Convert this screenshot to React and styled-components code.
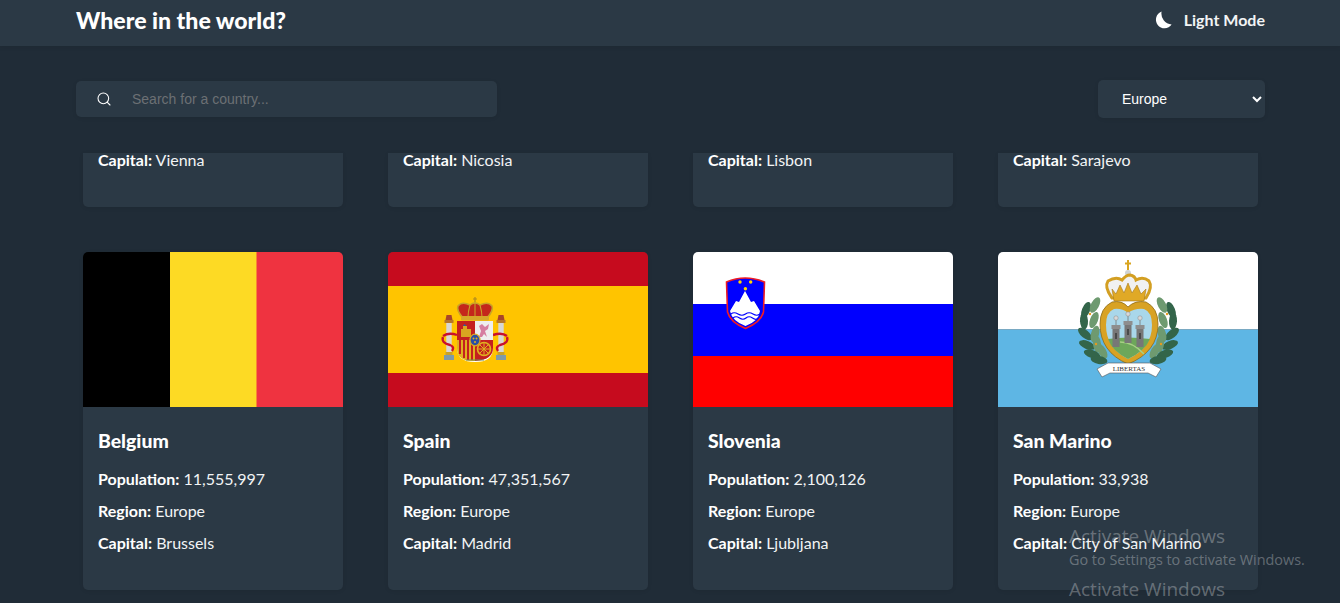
import styled, { createGlobalStyle } from "styled-components";
import { Search } from "lucide-react";

const GlobalStyle = createGlobalStyle`
  html, body {
    margin: 0;
    height: 100%;
    overflow: hidden;
    background-color: #202c37;
  }
  * { box-sizing: border-box; }
`;

const Page = styled.div`
  position: relative;
  height: 603px;
  overflow: hidden;
  color: #fff;
  font-family: "Lato", "Open Sans", sans-serif;
`;

const Header = styled.header`
  height: 46px;
  padding: 0 75px 6px 76px;
  display: flex;
  align-items: center;
  justify-content: space-between;
  background-color: #2b3945;
  box-shadow: 0 2px 4px rgba(0, 0, 0, 0.06);
`;

const Title = styled.h1`
  margin: 0;
  font-size: 23.1px;
  font-weight: 900;
`;

const ModeToggle = styled.div`
  display: flex;
  align-items: center;
  gap: 12px;
  height: 20px;
  line-height: 18px;
  font-size: 16px;
  font-weight: 700;
  color: #f2f4f5;
`;

const Toolbar = styled.div`
  height: 107px;
  padding: 0 75px 2px 76px;
  display: flex;
  align-items: center;
  justify-content: space-between;
`;

const SearchBox = styled.label`
  width: 421px;
  height: 36px;
  padding-left: 20px;
  display: flex;
  align-items: center;
  gap: 20px;
  background-color: #2b3945;
  border-radius: 5px;
  box-shadow: 0 1px 4px rgba(0, 0, 0, 0.08);
`;

const SearchInput = styled.input`
  flex: 1;
  padding: 0;
  border: none;
  outline: none;
  background: transparent;
  color: #fff;
  font-family: "Liberation Sans", sans-serif;
  font-size: 14px;
  &::placeholder { color: #6c7074; opacity: 1; }
`;

const RegionSelect = styled.select`
  width: 167px;
  height: 38px;
  padding-left: 20px;
  border: none;
  outline: none;
  border-radius: 5px;
  background-color: #2b3945;
  color: #fff;
  font-family: "Liberation Sans", sans-serif;
  font-size: 14px;
  box-shadow: 0 1px 4px rgba(0, 0, 0, 0.08);
`;

const Grid = styled.main`
  padding-left: 83px;
  display: grid;
  grid-template-columns: repeat(4, 260px);
  column-gap: 45px;
  row-gap: 45px;
  align-items: start;
`;

const Card = styled.article`
  background-color: #2b3945;
  border-radius: 5px;
  overflow: hidden;
  box-shadow: 0 1px 4px rgba(0, 0, 0, 0.08);
`;

/* top row is scrolled away, only the last line of each card is left */
const ClippedCard = styled(Card)`
  height: 54px;
  padding: 0 15px;
  border-radius: 0 0 5px 5px;
`;

const FlagBox = styled.div`
  height: 155px;
  svg { display: block; width: 260px; height: 155px; }
`;

const CardBody = styled.div`
  height: 183px;
  padding: 20px 15px 0;
`;

const CountryName = styled.h2`
  margin: 0 0 8px;
  height: 28px;
  line-height: 28px;
  font-size: 19.4px;
  font-weight: 900;
`;

const InfoLine = styled.p`
  margin: 0;
  height: 32px;
  line-height: 32px;
  font-size: 16px;
  font-weight: 400;
  color: #f2f4f5;
  white-space: nowrap;
  ${(p) => p.$clipped && "height: 15px; line-height: 14px;"}
`;

const InfoLabel = styled.strong`
  font-weight: 700;
  color: #fff;
`;

const Watermark = styled.div`
  position: absolute;
  left: 1069px;
  top: 524px;
  color: rgba(255, 255, 255, 0.3);
  font-family: "Open Sans", sans-serif;
  pointer-events: none;
`;

const WatermarkTitle = styled.div`
  height: 25px;
  line-height: 25px;
  font-size: 19px;
  white-space: nowrap;
`;

const WatermarkText = styled.div`
  height: 22px;
  line-height: 22px;
  font-size: 14.4px;
  white-space: nowrap;
  margin-bottom: 6px;
`;

const MoonIcon = () => (
  <svg width="17" height="18" viewBox="0 0 17 18">
    <path
      d="M6.6 0.6 A8.6 8.6 0 1 0 16.6 13.6 A11 11 0 0 1 6.6 0.6 Z"
      fill="#fff"
    />
  </svg>
);

const BelgiumFlag = () => (
  <svg viewBox="0 0 260 155">
    <rect width="87" height="155" fill="#000" />
    <rect x="87" width="87" height="155" fill="#fdda24" />
    <rect x="173.500" width="86.500" height="155" fill="#ef3340" />
  </svg>
);

const Pillar = ({ x }) => (
  <g>
    <rect x={x - 4.5} y={68} width={9} height={3} fill="#b5762a" />
    <path d={`M${x - 3.5} 68 L${x - 2.5} 63 H${x + 2.5} L${x + 3.5} 68 Z`} fill="#a8442a" />
    <rect x={x - 2.7} y={71} width={5.4} height={30} fill="#d7d7d7" />
    <rect x={x - 3.5} y={100} width={7} height={3} fill="#c9a227" />
    <rect x={x - 5} y={103} width={10} height={5} fill="#7f9aa8" />
  </g>
);

const SpainFlag = () => (
  <svg viewBox="0 0 260 155">
    <rect width="260" height="155" fill="#c60b1e" />
    <rect y="34" width="260" height="87" fill="#ffc400" />
    <Pillar x={61} />
    <Pillar x={113} />
    <path
      d="M55 84 Q61 80 69 83 M105 83 Q114 80 119 84 M55 85 Q53 91 62 93 Q67 95 64 99 M119 85 Q121 91 112 93 Q107 95 110 99"
      fill="none"
      stroke="#c8102e"
      strokeWidth="2.4"
    />
    {/* crown */}
    <path d="M87 45 V50 M85 47 H89" stroke="#b08a20" strokeWidth="1.2" />
    <path
      d="M75 66 Q68 58 70 54 Q74 49 82 53 Q87 49 92 53 Q100 49 104 54 Q106 58 99 66 Z"
      fill="#c4271c"
      stroke="#c9a227"
      strokeWidth="1.6"
    />
    <path d="M82 53 Q80 60 80 65 M92 53 Q94 60 94 65 M87 50 V65" stroke="#c9a227" strokeWidth="1.1" fill="none" />
    <rect x="73" y="64" width="28" height="4.500" rx="1" fill="#d6a829" />
    {/* shield */}
    <path d="M69 69 H105 V96 Q105 110 87 110 Q69 110 69 96 Z" fill="#fff" />
    <path d="M69 69 H87 V88 H69 Z" fill="#c4201f" />
    <path d="M73 85 V77 H75 V74 H79 V77 H83 V85 Z" fill="#d9a520" />
    <path d="M76.500 72 L78.500 74 H75 Z" fill="#2a5fa0" />
    <path d="M87 69 H105 V88 H87 Z" fill="#eeeeee" />
    <path d="M91 85 L93 79 L91 74 L94 72 L97 75 L101 72 L100 77 L97 79 L99 85 L96 82 L94 85 Z" fill="#d67ea0" />
    <path d="M69 88 H87 V109 Q69 110 69 96 Z" fill="#e0b020" />
    <path d="M72 88 V102 M76 88 V106 M80 88 V108 M84 88 V108" stroke="#c4201f" strokeWidth="2" />
    <path d="M87 88 H105 V96 Q105 108 87 109 Z" fill="#c4201f" />
    <circle cx="96" cy="97" r="6.500" fill="none" stroke="#e0b020" strokeWidth="1.6" />
    <path d="M96 90.500 V103.500 M89.500 97 H102.500 M91.500 92.500 L100.500 101.500 M100.500 92.500 L91.500 101.500" stroke="#e0b020" strokeWidth="1" />
    <ellipse cx="87" cy="88" rx="5" ry="5.800" fill="#2a4fa5" stroke="#d6a829" strokeWidth="1.2" />
    <circle cx="85.500" cy="86.500" r="1" fill="#e0b020" />
    <circle cx="88.500" cy="86.500" r="1" fill="#e0b020" />
    <circle cx="87" cy="90" r="1" fill="#e0b020" />
    <path d="M78 108 H96" stroke="#6f8a5a" strokeWidth="1.2" />
  </svg>
);

const SloveniaFlag = () => (
  <svg viewBox="0 0 260 155">
    <rect width="260" height="52" fill="#fff" />
    <rect y="52" width="260" height="52" fill="#00f" />
    <rect y="104" width="260" height="51" fill="#f00" />
    <path d="M33.500 30 Q52 22 71.500 30 L70.500 60 Q68 70 52.500 76.500 Q37 70 34.500 60 Z" fill="#00f" stroke="#f01c24" strokeWidth="1.6" />
    <path d="M37 59 L43 49 L46 50 L52 39 L58 50 L61 49 L67 59 Q66 69 52.500 74 Q39 69 37 59 Z" fill="#fff" />
    <path
      d="M38 62 Q41 59.500 45 62 T52.500 62 T60 62 T67 62 M40 66 Q43 63.500 46.500 66 T53 66 T59.500 66 T65 66"
      fill="none"
      stroke="#00f"
      strokeWidth="1.2"
    />
    <circle cx="47" cy="30" r="1.700" fill="#ffd800" />
    <circle cx="57.700" cy="30" r="1.700" fill="#ffd800" />
    <circle cx="52.400" cy="36.800" r="1.700" fill="#ffd800" />
  </svg>
);

const leaves = [
  [88, 58, 22], [97, 53, 28], [86, 69, -3], [96, 68, 20], [87, 82, -50], [97, 82, 15],
  [89, 93, -68], [99, 92, -5], [94, 102, -72], [104, 99, -30], [101, 108, -80],
];

const Tower = ({ x, y }) => (
  <g>
    <path d={`M${x} ${y + 6} V${y - 1}`} stroke="#777" strokeWidth="0.8" />
    <circle cx={x} cy={y - 1} r={2.2} fill="#d8d8d8" stroke="#888" strokeWidth="0.5" />
    <rect x={x - 4.5} y={y + 6} width={9} height={4} fill="#8e8e8e" />
    <rect x={x - 3.5} y={y + 10} width={7} height={18} fill="#777" />
    <rect x={x - 0.8} y={y + 14} width={1.6} height={6} fill="#3f3f3f" />
  </g>
);

const SanMarinoFlag = () => (
  <svg viewBox="0 0 260 155">
    <rect width="260" height="77.500" fill="#fff" />
    <rect y="77.500" width="260" height="77.500" fill="#5eb6e4" />
    {/* laurels */}
    {leaves.map(([x, y, r], i) => (
      <ellipse key={i} cx={x} cy={y} rx="4" ry="8.500" fill={i % 2 ? "#6e9a70" : "#33654a"} transform={`rotate(${r} ${x} ${y})`} />
    ))}
    {leaves.map(([x, y, r], i) => (
      <ellipse key={i} cx={261 - x} cy={y} rx="4" ry="8.500" fill={i % 2 ? "#6e9a70" : "#33654a"} transform={`rotate(${-r} ${261 - x} ${y})`} />
    ))}
    <circle cx="92" cy="62" r="1.200" fill="#e59a1f" />
    <circle cx="169" cy="62" r="1.200" fill="#e59a1f" />
    <circle cx="98" cy="92" r="1.200" fill="#e59a1f" />
    <circle cx="163" cy="92" r="1.200" fill="#e59a1f" />
    {/* crown */}
    <path d="M130 8 V18 M127 11.500 H133" stroke="#d9a520" strokeWidth="2" />
    <circle cx="130" cy="21" r="3" fill="#cfd3d6" />
    <path d="M114 46 Q106 35 110 29 Q118 24 124 28 Q128 23 132 23 Q137 24 138 28 Q145 24 151 29 Q155 35 148 46 Z" fill="#f1f1f1" stroke="#d39f22" strokeWidth="3" />
    <path d="M114 37 L118 42 L122 33 L126 41 L130 31 L134 41 L139 33 L143 42 L148 37 L146 49 H116 Z" fill="#e0a926" stroke="#a6781a" strokeWidth="0.6" />
    {/* shield */}
    <path d="M130 112 Q102 100 102 72 Q102 56 114 50 Q124 48 130 55 Q137 48 148 50 Q160 56 160 72 Q160 100 130 112 Z" fill="#d8a224" stroke="#8f6c17" strokeWidth="0.8" />
    <path d="M130 107 Q108 96 108 73 Q108 60 116 57 Q124 56 130 61 Q137 56 146 57 Q154 60 154 73 Q154 96 130 107 Z" fill="#a9d7ea" />
    <path d="M130 107 Q114 99 110 87 Q130 84 152 87 Q147 99 130 107 Z" fill="#6da75a" />
    <path d="M122 90 Q135 90 146 102" stroke="#a8cf86" strokeWidth="1.500" fill="none" />
    <Tower x={118} y={67} />
    <Tower x={130} y={63} />
    <Tower x={142} y={67} />
    {/* ribbon */}
    <path d="M99 117 L110 111 H152 L163 117 L158 125 L150 121 H112 L104 125 Z" fill="#fff" stroke="#555" strokeWidth="0.6" />
    <text x="131" y="118.500" textAnchor="middle" fontSize="7" fontFamily="Liberation Serif, serif" fill="#333">LIBERTAS</text>
  </svg>
);

const clippedCapitals = ["Vienna", "Nicosia", "Lisbon", "Sarajevo"];

const countries = [
  { name: "Belgium", population: "11,555,997", capital: "Brussels", Flag: BelgiumFlag },
  { name: "Spain", population: "47,351,567", capital: "Madrid", Flag: SpainFlag },
  { name: "Slovenia", population: "2,100,126", capital: "Ljubljana", Flag: SloveniaFlag },
  { name: "San Marino", population: "33,938", capital: "City of San Marino", Flag: SanMarinoFlag },
];

export default function App() {
  return (
    <Page>
      <GlobalStyle />
      <Header>
        <Title>Where in the world?</Title>
        <ModeToggle>
          <MoonIcon />
          Light Mode
        </ModeToggle>
      </Header>
      <Toolbar>
        <SearchBox>
          <Search size={16} color="#fff" strokeWidth={1.6} />
          <SearchInput placeholder="Search for a country..." />
        </SearchBox>
        <RegionSelect defaultValue="Europe">
          <option>Europe</option>
          <option>Africa</option>
          <option>Americas</option>
          <option>Asia</option>
          <option>Oceania</option>
        </RegionSelect>
      </Toolbar>
      <Grid>
        {clippedCapitals.map((capital) => (
          <ClippedCard key={capital}>
            <InfoLine $clipped><InfoLabel>Capital:</InfoLabel> {capital}</InfoLine>
          </ClippedCard>
        ))}
        {countries.map(({ name, population, capital, Flag }) => (
          <Card key={name}>
            <FlagBox><Flag /></FlagBox>
            <CardBody>
              <CountryName>{name}</CountryName>
              <InfoLine><InfoLabel>Population:</InfoLabel> {population}</InfoLine>
              <InfoLine><InfoLabel>Region:</InfoLabel> Europe</InfoLine>
              <InfoLine><InfoLabel>Capital:</InfoLabel> {capital}</InfoLine>
            </CardBody>
          </Card>
        ))}
      </Grid>
      <Watermark>
        <WatermarkTitle>Activate Windows</WatermarkTitle>
        <WatermarkText>Go to Settings to activate Windows.</WatermarkText>
        <WatermarkTitle>Activate Windows</WatermarkTitle>
      </Watermark>
    </Page>
  );
}
